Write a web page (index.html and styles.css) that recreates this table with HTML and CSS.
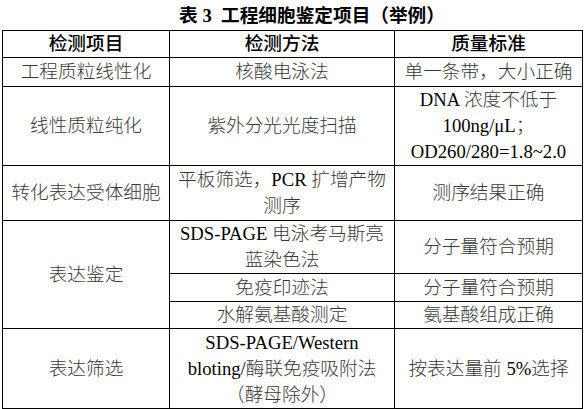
FILE: index.html
```html
<!DOCTYPE html>
<html lang="zh-CN">
<head>
<meta charset="utf-8">
<title>表 3 工程细胞鉴定项目（举例）</title>
<link rel="stylesheet" href="styles.css">
</head>
<body>
<div class="title">表 3&nbsp; 工程细胞鉴定项目（举例）</div>
<table class="spec">
  <colgroup>
    <col class="c1">
    <col class="c2">
    <col class="c3">
  </colgroup>
  <thead>
    <tr class="r-head">
      <th>检测项目</th>
      <th>检测方法</th>
      <th>质量标准</th>
    </tr>
  </thead>
  <tbody>
    <tr class="r-1">
      <td>工程质粒线性化</td>
      <td>核酸电泳法</td>
      <td>单一条带，大小正确</td>
    </tr>
    <tr class="r-3">
      <td>线性质粒纯化</td>
      <td>紫外分光光度扫描</td>
      <td><span class="lat">DNA</span> 浓度不低于<br><span class="lat">100ng/μL</span>；<br><span class="lat">OD260/280=1.8~2.0</span></td>
    </tr>
    <tr class="r-2">
      <td>转化表达受体细胞</td>
      <td>平板筛选，<span class="lat">PCR</span> 扩增产物<br>测序</td>
      <td>测序结果正确</td>
    </tr>
    <tr class="r-2b">
      <td rowspan="3">表达鉴定</td>
      <td><span class="lat">SDS-PAGE</span> 电泳考马斯亮<br>蓝染色法</td>
      <td>分子量符合预期</td>
    </tr>
    <tr class="r-1b">
      <td>免疫印迹法</td>
      <td>分子量符合预期</td>
    </tr>
    <tr class="r-1c">
      <td>水解氨基酸测定</td>
      <td>氨基酸组成正确</td>
    </tr>
    <tr class="r-3b">
      <td>表达筛选</td>
      <td><span class="lat">SDS-PAGE/Western</span><br><span class="lat">bloting/</span>酶联免疫吸附法<br>（酵母除外）</td>
      <td>按表达量前 <span class="lat">5%</span>选择</td>
    </tr>
  </tbody>
</table>
</body>
</html>
```

FILE: styles.css
```css
html, body {
  margin: 0;
  padding: 0;
  background: #ffffff;
}

body {
  font-family: "Liberation Serif", "Noto Sans CJK SC", serif;
  color: #111111;
}

.title {
  height: 30px;
  line-height: 32px;
  padding-left: 40px;
  text-align: center;
  font-size: 18.67px;
  font-weight: bold;
  color: #000000;
  width: 544px;
}

.spec {
  margin-left: 2px;
  width: 580px;
  border-collapse: collapse;
  table-layout: fixed;
}

.c1 { width: 167px; }
.c2 { width: 225px; }
.c3 { width: 188px; }

.spec th,
.spec td {
  border: 1px solid #000000;
  padding: 0;
  text-align: center;
  vertical-align: middle;
  font-size: 18.67px;
  line-height: 26px;
  white-space: nowrap;
}

.spec th {
  font-family: "Liberation Sans", "Noto Sans CJK SC", sans-serif;
  font-weight: 500;
  color: #000000;
}

.spec td {
  font-weight: 300;
  color: #383838;
}

.spec td .lat {
  color: #000000;
}

.r-head { height: 27px; }
.r-1 { height: 29px; }
.r-3 { height: 78px; }
.r-2 { height: 55px; }
.r-2b { height: 53px; }
.r-1b { height: 28px; }
.r-1c { height: 27px; }
.r-3b { height: 80px; }
```
